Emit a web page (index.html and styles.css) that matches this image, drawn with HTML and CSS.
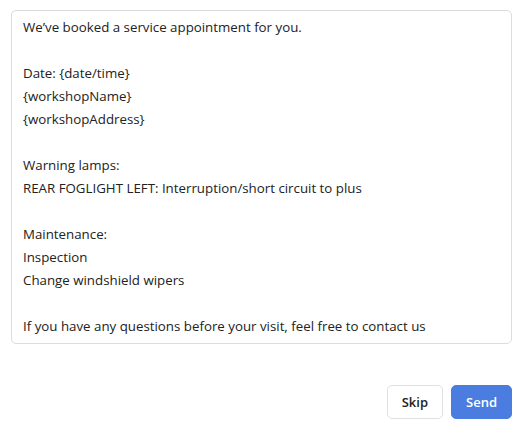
FILE: index.html
```html
<!DOCTYPE html>
<html>
<head>
<meta charset="utf-8">
<link rel="stylesheet" href="styles.css">
</head>
<body>
<div class="page">
  <div class="message">
    <p>We’ve booked a service appointment for you.</p>
    <p class="blank"></p>
    <p>Date: {date/time}</p>
    <p>{workshopName}</p>
    <p>{workshopAddress}</p>
    <p class="blank"></p>
    <p>Warning lamps:</p>
    <p>REAR FOGLIGHT LEFT: Interruption/short circuit to plus</p>
    <p class="blank"></p>
    <p>Maintenance:</p>
    <p>Inspection</p>
    <p>Change windshield wipers</p>
    <p class="blank"></p>
    <p>If you have any questions before your visit, feel free to contact us</p>
  </div>
  <div class="actions">
    <button class="btn skip">Skip</button>
    <button class="btn send">Send</button>
  </div>
</div>
</body>
</html>
```
FILE: styles.css
```css
html, body {
  margin: 0;
  padding: 0;
  background: #ffffff;
}
body {
  font-family: "Open Sans", "Liberation Sans", sans-serif;
  color: #222222;
}
.page {
  padding: 10px 10px 0 11px;
  display: flex;
  flex-direction: column;
}
.message {
  border: 1px solid #dcdcdc;
  border-radius: 5px;
  padding: 5px 11px 5px 11px;
  font-size: 13.3px;
  line-height: 23px;
}
.message p {
  margin: 0;
  height: 23px;
  white-space: nowrap;
}
.actions {
  display: flex;
  justify-content: flex-end;
  gap: 8px;
  margin-top: 41px;
}
.btn {
  font-family: "Open Sans", "Liberation Sans", sans-serif;
  font-size: 13px;
  font-weight: 600;
  height: 34px;
  border-radius: 5px;
  padding: 0 14px;
  cursor: pointer;
}
.skip {
  background: #ffffff;
  border: 1px solid #e0e0e0;
  color: #222222;
}
.send {
  background: #4a7ddf;
  border: 1px solid #4a7ddf;
  color: #ffffff;
}
```
